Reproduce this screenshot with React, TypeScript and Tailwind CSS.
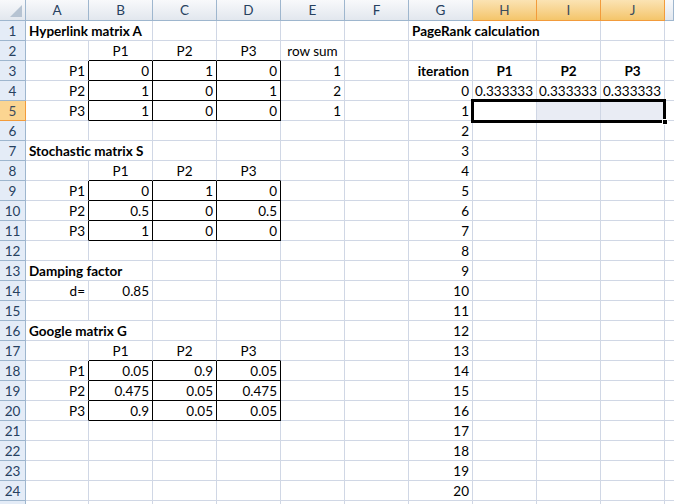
import React from "react";

type Cell = { v: string; bold?: boolean; align?: "left" | "right" | "center"; span?: number };

const COLS = ["A", "B", "C", "D", "E", "F", "G", "H", "I", "J"];

// sheet contents keyed by address
const cells: Record<string, Cell> = {
  A1: { v: "Hyperlink matrix A", bold: true, align: "left", span: 2 },
  G1: { v: "PageRank calculation", bold: true, align: "left", span: 3 },
  B2: { v: "P1", align: "center" },
  C2: { v: "P2", align: "center" },
  D2: { v: "P3", align: "center" },
  E2: { v: "row sum", align: "center" },
  G3: { v: "iteration", bold: true, align: "right" },
  H3: { v: "P1", bold: true, align: "center" },
  I3: { v: "P2", bold: true, align: "center" },
  J3: { v: "P3", bold: true, align: "center" },
  G4: { v: "0" },
  H4: { v: "0.333333" },
  I4: { v: "0.333333" },
  J4: { v: "0.333333" },
  A7: { v: "Stochastic matrix S", bold: true, align: "left", span: 2 },
  B8: { v: "P1", align: "center" },
  C8: { v: "P2", align: "center" },
  D8: { v: "P3", align: "center" },
  A13: { v: "Damping factor", bold: true, align: "left", span: 2 },
  A14: { v: "d=" },
  B14: { v: "0.85" },
  A16: { v: "Google matrix G", bold: true, align: "left", span: 2 },
  B17: { v: "P1", align: "center" },
  C17: { v: "P2", align: "center" },
  D17: { v: "P3", align: "center" },
};

function matrix(top: number, rows: string[][]) {
  rows.forEach((r, i) => {
    cells[`A${top + i}`] = { v: `P${i + 1}` };
    r.forEach((v, j) => {
      cells[`${COLS[j + 1]}${top + i}`] = { v };
    });
  });
}

matrix(3, [["0", "1", "0"], ["1", "0", "1"], ["1", "0", "0"]]);
matrix(9, [["0", "1", "0"], ["0.5", "0", "0.5"], ["1", "0", "0"]]);
matrix(18, [["0.05", "0.9", "0.05"], ["0.475", "0.05", "0.475"], ["0.9", "0.05", "0.05"]]);
cells.E3 = { v: "1" };
cells.E4 = { v: "2" };
cells.E5 = { v: "1" };
for (let i = 1; i <= 20; i++) cells[`G${i + 4}`] = { v: String(i) };

const boxed = (c: number, r: number) =>
  c >= 1 && c <= 3 && ((r >= 3 && r <= 5) || (r >= 9 && r <= 11) || (r >= 18 && r <= 20));

function GridCell({ c, r, cell }: { c: number; r: number; cell?: Cell }) {
  const span = cell?.span ?? 1;
  const last = c + span - 1;
  const blackRight = boxed(last, r) || boxed(last + 1, r);
  const blackBottom = boxed(c, r) || boxed(c, r + 1);
  const align = cell?.align ?? "right";
  return (
    <div
      className={`h-[20px] border-r border-b flex items-center pt-[2px] px-[3px] whitespace-nowrap overflow-visible text-black ${
        blackRight ? "border-r-black" : "border-r-[#d0d7e5]"
      } ${blackBottom ? "border-b-black" : "border-b-[#d0d7e5]"} ${
        align === "left" ? "justify-start" : align === "center" ? "justify-center" : "justify-end"
      } ${cell?.bold ? "font-bold" : ""} ${span === 2 ? "col-span-2" : span === 3 ? "col-span-3" : ""}`}
    >
      {cell?.v}
    </div>
  );
}

function ColHeader({ label, on }: { label: string; on?: boolean }) {
  return (
    <div
      className={`h-[21px] flex items-center justify-center pt-[1px] border-r border-b ${
        on
          ? "bg-gradient-to-b from-[#fbe3b3] to-[#f4c56a] border-[#f29b3b] text-[#3b4c5e]"
          : "bg-gradient-to-b from-[#f8f9fb] to-[#e2e7ee] border-[#9eb6ce] text-[#27415f]"
      }`}
    >
      {label}
    </div>
  );
}

function RowHeader({ n }: { n: number }) {
  const on = n === 5;
  return (
    <div
      className={`h-[20px] flex items-center justify-center pt-[2px] border-r border-b ${
        on ? "bg-[#fbd591] border-[#f29b3b] text-[#3b4c5e]" : "bg-[#e4ecf7] border-[#9eb6ce] text-[#27415f]"
      }`}
    >
      {n <= 24 ? n : ""}
    </div>
  );
}

export default function App() {
  const rows = Array.from({ length: 25 }, (_, i) => i + 1);
  return (
    <div className="w-[674px] h-[504px] overflow-hidden bg-white font-['Lato','Liberation_Sans',sans-serif] text-[13.5px] leading-none">
      <div className="grid grid-cols-[26px_63px_repeat(9,64px)_1fr]">
        <div className="h-[21px] border-r border-b border-[#9eb6ce] bg-gradient-to-b from-[#f8f9fb] to-[#e2e7ee] flex items-end justify-end p-[3px]">
          <svg width="12" height="12" viewBox="0 0 12 12">
            <polygon points="12,0 12,12 0,12" fill="#b6c3d2" />
          </svg>
        </div>
        {COLS.map((l, i) => (
          <ColHeader key={l} label={l} on={i >= 7} />
        ))}
        <ColHeader label="" />

        {rows.map((r) => {
          const out: React.ReactNode[] = [<RowHeader key={`h${r}`} n={r} />];
          if (r === 5) {
            COLS.slice(0, 7).forEach((l, c) => out.push(<GridCell key={l + r} c={c} r={r} cell={cells[l + r]} />));
            out.push(
              <div key="sel" className="col-span-3 relative flex">
                <div className="w-[64px] h-[20px] border-r border-b border-[#d0d7e5] bg-white" />
                <div className="w-[64px] h-[20px] border-r border-b border-[#d0d7e5] bg-[#e9ecf4]" />
                <div className="w-[64px] h-[20px] border-r border-b border-[#d0d7e5] bg-[#e9ecf4]" />
                <div className="absolute -left-[2px] -top-[2px] w-[195px] h-[24px] border-[3px] border-black pointer-events-none" />
                <div className="absolute -right-[3px] -bottom-[4px] w-[6px] h-[6px] bg-black border border-white" />
              </div>
            );
          } else {
            for (let c = 0; c < COLS.length; ) {
              const cell = cells[COLS[c] + r];
              out.push(<GridCell key={COLS[c] + r} c={c} r={r} cell={cell} />);
              c += cell?.span ?? 1;
            }
          }
          out.push(<div key={`k${r}`} className="h-[20px] border-b border-[#d0d7e5]" />);
          return out;
        })}
      </div>
    </div>
  );
}
